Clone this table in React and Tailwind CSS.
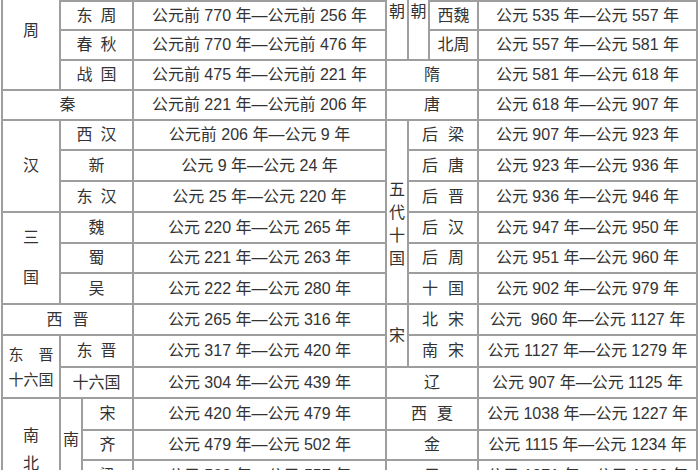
const Cell = ({ className = "", children }) => (
  <div className={`bg-white flex items-center justify-center ${className}`}>{children}</div>
)

const Name = ({ t, gap = "gap-2" }) => (
  <span className={`flex ${gap}`}>
    {t.split("").map((c, i) => (
      <span key={i}>{c}</span>
    ))}
  </span>
)

const Vert = ({ t, gap = "gap-[8px]" }) => (
  <span className={`flex flex-col items-center leading-[20px] ${gap}`}>
    {t.split("").map((c, i) => (
      <span key={i}>{c}</span>
    ))}
  </span>
)

const leftRows = [
  ["西周", "公元前 1046 年—公元前 771 年"],
  ["东周", "公元前 770 年—公元前 256 年"],
  ["春秋", "公元前 770 年—公元前 476 年"],
  ["战国", "公元前 475 年—公元前 221 年"],
  null,
  ["西汉", "公元前 206 年—公元 9 年"],
  ["新", "公元 9 年—公元 24 年"],
  ["东汉", "公元 25 年—公元 220 年"],
  ["魏", "公元 220 年—公元 265 年"],
  ["蜀", "公元 221 年—公元 263 年"],
  ["吴", "公元 222 年—公元 280 年"],
  null,
  ["东晋", "公元 317 年—公元 420 年"],
  ["十六国", "公元 304 年—公元 439 年"],
]

const southRows = [
  ["宋", "公元 420 年—公元 479 年"],
  ["齐", "公元 479 年—公元 502 年"],
  ["梁", "公元 502 年—公元 557 年"],
  ["陈", "公元 557 年—公元 589 年"],
]

const rightDates = [
  "公元 550 年—公元 577 年",
  "公元 535 年—公元 557 年",
  "公元 557 年—公元 581 年",
  "公元 581 年—公元 618 年",
  "公元 618 年—公元 907 年",
  "公元 907 年—公元 923 年",
  "公元 923 年—公元 936 年",
  "公元 936 年—公元 946 年",
  "公元 947 年—公元 950 年",
  "公元 951 年—公元 960 年",
  "公元 902 年—公元 979 年",
  "公元  960 年—公元 1127 年",
  "公元 1127 年—公元 1279 年",
  "公元 907 年—公元 1125 年",
  "公元 1038 年—公元 1227 年",
  "公元 1115 年—公元 1234 年",
  "公元 1271 年—公元 1368 年",
  "公元 1368 年—公元 1644 年",
]

const rowStart = [
  "row-start-1", "row-start-2", "row-start-3", "row-start-4", "row-start-5", "row-start-6",
  "row-start-7", "row-start-8", "row-start-9", "row-start-10", "row-start-11", "row-start-12",
  "row-start-13", "row-start-14", "row-start-15", "row-start-16", "row-start-17", "row-start-18",
]

const App = () => {
  return (
    <div className="w-[700px] h-[470px] overflow-hidden bg-white text-[#333] text-[16px] font-['Liberation_Sans','Noto_Sans_CJK_SC',sans-serif]">
      <div className="ml-px -mt-[30px] w-[697px] grid bg-[#9e9e9e] gap-[2px] p-[2px] grid-cols-[56px_20px_49px_251px_20px_19px_47px_217px] grid-rows-[28px_27px_28px_28px_28px_28px_29px_29px_29px_28px_29px_29px_30px_29px_30px_28px_29px_29px]">
        {/* left groups */}
        <Cell className="col-start-1 row-start-1 row-span-4">周</Cell>
        <Cell className="col-start-1 col-span-3 row-start-5"><Name t="秦" /></Cell>
        <Cell className="col-start-1 row-start-6 row-span-3">汉</Cell>
        <Cell className="col-start-1 row-start-9 row-span-3">
          <Vert t="三国" gap="gap-[20px]" />
        </Cell>
        <Cell className="col-start-1 col-span-3 row-start-12"><Name t="西晋" gap="gap-[10px]" /></Cell>
        <Cell className="col-start-1 row-start-13 row-span-2 text-[15px]">
          <div className="flex flex-col items-center leading-[25px]">
            <span className="flex justify-between w-[45px]"><span>东</span><span>晋</span></span>
            <span>十六国</span>
          </div>
        </Cell>
        <Cell className="col-start-1 row-start-15 row-span-4 pt-[8px]">
          <Vert t="南北朝" />
        </Cell>
        <Cell className="col-start-2 row-start-15 row-span-4">
          <Vert t="南朝" gap="gap-[20px]" />
        </Cell>

        {leftRows.map((r, i) =>
          r ? (
            <div key={i} className="contents">
              <Cell className={`col-start-2 col-span-2 ${rowStart[i]}`}>
                {r[0].length === 2 ? <Name t={r[0]} /> : r[0]}
              </Cell>
              <Cell className={`col-start-4 ${rowStart[i]}`}>{r[1]}</Cell>
            </div>
          ) : null
        )}
        <Cell className="col-start-4 row-start-5">公元前 221 年—公元前 206 年</Cell>
        <Cell className="col-start-4 row-start-12">公元 265 年—公元 316 年</Cell>

        {southRows.map((r, i) => (
          <div key={i} className="contents">
            <Cell className={`col-start-3 ${rowStart[i + 14]}`}>{r[0]}</Cell>
            <Cell className={`col-start-4 ${rowStart[i + 14]}`}>{r[1]}</Cell>
          </div>
        ))}

        {/* right groups */}
        <Cell className="col-start-5 row-start-1 row-span-3 !items-start pt-[28px]">朝</Cell>
        <Cell className="col-start-6 row-start-1 row-span-3 !items-start pt-[28px]">朝</Cell>
        <Cell className="col-start-7 row-start-1">北齐</Cell>
        <Cell className="col-start-7 row-start-2">西魏</Cell>
        <Cell className="col-start-7 row-start-3">北周</Cell>
        <Cell className="col-start-5 col-span-3 row-start-4">隋</Cell>
        <Cell className="col-start-5 col-span-3 row-start-5">唐</Cell>
        <Cell className="col-start-5 row-start-6 row-span-6 pt-[24px]">
          <Vert t="五代十国" gap="gap-[3px]" />
        </Cell>
        {["后梁", "后唐", "后晋", "后汉", "后周", "十国"].map((n, i) => (
          <Cell key={n} className={`col-start-6 col-span-2 ${rowStart[i + 5]}`}>
            <Name t={n} gap="gap-[10px]" />
          </Cell>
        ))}
        <Cell className="col-start-5 row-start-12 row-span-2">宋</Cell>
        <Cell className="col-start-6 col-span-2 row-start-12"><Name t="北宋" gap="gap-[10px]" /></Cell>
        <Cell className="col-start-6 col-span-2 row-start-13"><Name t="南宋" gap="gap-[10px]" /></Cell>
        {["辽", "西夏", "金", "元", "明"].map((n, i) => (
          <Cell key={n} className={`col-start-5 col-span-3 ${rowStart[i + 13]}`}>
            <Name t={n} gap="gap-[10px]" />
          </Cell>
        ))}

        {rightDates.map((d, i) => (
          <Cell key={i} className={`col-start-8 ${rowStart[i]} whitespace-pre`}>{d}</Cell>
        ))}
      </div>
    </div>
  )
}

export default App
